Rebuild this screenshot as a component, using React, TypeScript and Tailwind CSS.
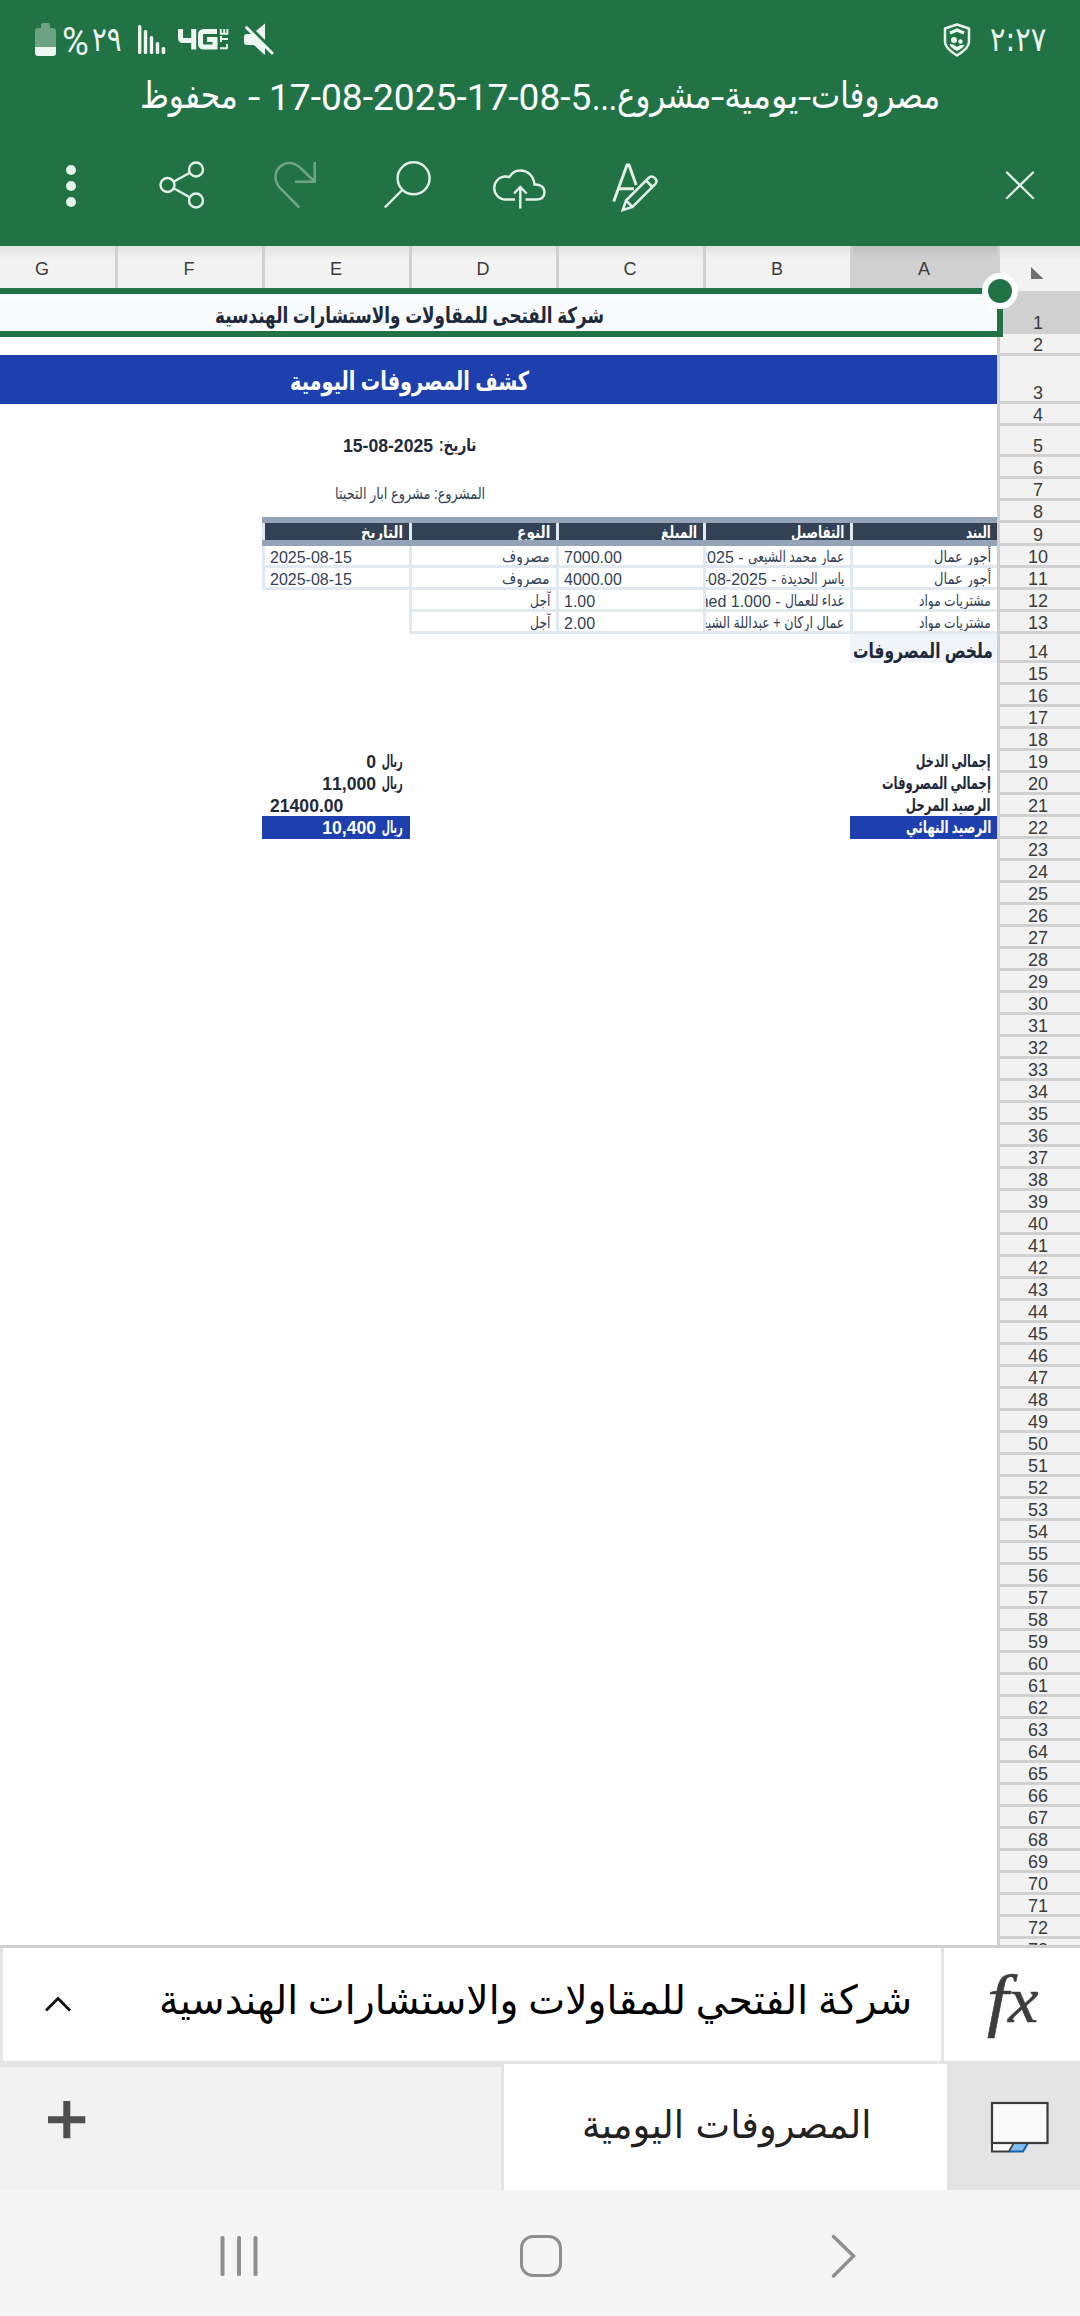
import { useLayoutEffect, useRef, useState, type ReactNode } from "react";

/** Text squeezed or stretched horizontally to a known width. */
function Fit({ w, className = "", up = 0, children }: { w: number; className?: string; up?: number; children: ReactNode }) {
  const ref = useRef<HTMLSpanElement>(null);
  const [scale, setScale] = useState(1);
  useLayoutEffect(() => {
    if (ref.current) setScale(w / ref.current.offsetWidth);
  }, [w]);
  return (
    <span className="inline-flex justify-start whitespace-nowrap" style={{ width: w }}>
      <span
        ref={ref}
        className={"inline-block shrink-0 whitespace-pre rtl:origin-right ltr:origin-left " + className}
        style={{ transform: `translateY(${-up}px) scaleX(${scale})` }}
      >
        {children}
      </span>
    </span>
  );
}

const sans = "font-['Liberation_Sans','DejaVu_Sans',sans-serif]";

function StatusBar() {
  return (
    <div className="flex h-[76px] items-start justify-between pl-[35px] pr-[34px] pt-[23px] text-[#eef6f1]">
      <div className="flex items-start">
        <svg width="21" height="33" viewBox="0 0 21 33">
          <path d="M6 5V2q0-2 2-2h5q2 0 2 2v3h3q3 0 3 3v16H0V8q0-3 3-3z" fill="#6ea285" />
          <path d="M0 24h21v6q0 3-3 3H3q-3 0-3-3z" fill="currentColor" />
        </svg>
        <div dir="ltr" className="ml-[6px] flex font-['Roboto','DejaVu_Sans',sans-serif] text-[38px] leading-[40px]">
          <Fit w={27} up={1}>%</Fit>
          <span className="ml-[3px] flex"><Fit w={30} className="text-[34px]" up={4}>٢٩</Fit></span>
        </div>
        <svg className="ml-[16px]" width="28" height="33" viewBox="0 0 28 33" fill="currentColor">
          <rect x="0" y="2" width="3.4" height="29" rx="1.5" />
          <rect x="5.8" y="7" width="3.4" height="24" rx="1.5" />
          <rect x="11.8" y="13" width="3.4" height="18" rx="1.5" />
          <rect x="17.8" y="19" width="3.4" height="12" rx="1.5" />
          <rect x="23.7" y="24" width="3.6" height="7" rx="1.5" />
        </svg>
        <svg className="ml-[12px]" width="51" height="33" viewBox="0 0 51 33" fill="none" stroke="currentColor">
          <path d="M2.500 6v9q0 2.500 2.500 2.500h10M15.700 6v20.500" strokeWidth="5" />
          <path d="M39 8.500H26q-3.500 0-3.500 3.500v8.500q0 3.500 3.500 3.500h11v-7.500h-8" strokeWidth="5" />
          <path d="M49 25.500v-4.500M42 25.300h7.500M43 19v-6M43 16h7M42.800 11.500V6M46.200 11.500V6M49.400 11.500V6M42 10.700h8" strokeWidth="1.900" />
        </svg>
        <svg className="ml-[15px]" width="32" height="34" viewBox="0 0 32 34">
          <path d="M0 14q0-3 3-3h6L21 24v7.500h-1L10 22H3q-3 0-3-3zM12 8l9-7.500V17z" fill="currentColor" />
          <path d="M2.500 4.500L28 30" stroke="currentColor" strokeWidth="3" strokeLinecap="round" />
        </svg>
      </div>
      <div className="flex items-start">
        <svg width="28" height="34" viewBox="0 0 28 34" fill="none">
          <path d="M14 1.500L26 5.500V19q0 6-12 13.500Q2 25 2 19V5.500z" stroke="currentColor" strokeWidth="2.500" strokeLinejoin="round" />
          <path d="M7 10l7-3 7 3" stroke="currentColor" strokeWidth="3.300" />
          <circle cx="11" cy="17" r="3" fill="currentColor" />
          <circle cx="17.500" cy="18.500" r="2.200" fill="currentColor" />
          <path d="M6.500 21q4-.5 7.500 3 3.500-3 7.500-2-1 3-7.500 6-6.500-3-7.500-7z" fill="currentColor" />
        </svg>
        <div className="ml-[19px] font-['DejaVu_Sans',sans-serif] text-[34px] leading-[32px]">
          <Fit w={56}>{"\u202d٢:٢٧"}</Fit>
        </div>
      </div>
    </div>
  );
}

function TitleBar() {
  return (
    <div dir="rtl" className="flex h-[56px] whitespace-pre pr-[140px] font-['Roboto','DejaVu_Sans',sans-serif] text-[37px] leading-[43px] text-white">
      <Fit w={129} up={2}>مصروفات</Fit>
      <Fit w={13} className="font-['Roboto']">{"\u200e-"}</Fit>
      <Fit w={74} up={2}>يومية</Fit>
      <Fit w={13} className="font-['Roboto']">{"\u200e-"}</Fit>
      <Fit w={94} up={2}>مشروع</Fit>
      <Fit w={25}>{"\u200e..."}</Fit>
      <bdo dir="ltr" className="flex"><Fit w={322}>17-08-2025-17-08-5</Fit></bdo>
      <span className="ml-[10px] mr-[10px] flex"><Fit w={12}>{"\u200e-"}</Fit></span>
      <Fit w={98} up={2}>محفوظ</Fit>
    </div>
  );
}

function Toolbar() {
  return (
    <div className="flex h-[114px] items-center justify-between pb-[8px] pl-[41px] pr-[30px] text-[#e3f1e8]">
      <div className="flex w-[620px] justify-between">
        <svg width="60" height="60" viewBox="41 155 60 60" fill="currentColor">
          <circle cx="71" cy="170" r="5" /><circle cx="71" cy="186" r="5" /><circle cx="71" cy="202" r="5" />
        </svg>
        <svg width="60" height="60" viewBox="153 155 60 60" fill="none" stroke="currentColor" strokeWidth="2.400">
          <circle cx="196" cy="169.500" r="7" /><circle cx="167.500" cy="185" r="7" /><circle cx="196" cy="200.500" r="7" />
          <path d="M173.600 181.700l16.200-8.900M173.600 188.300l16.200 8.900" />
        </svg>
        <svg width="60" height="60" viewBox="265 155 60 60" fill="none" stroke="#6fa586" strokeWidth="2.500">
          <path d="M314.700 162v19.700H295M314 181L299.500 167Q294 163 289.500 163C281 163 275.500 170 275.500 177Q275.500 183 280 188L299.300 207.500" />
        </svg>
        <svg width="60" height="60" viewBox="377 155 60 60" fill="none" stroke="currentColor" strokeWidth="2.400">
          <circle cx="413.600" cy="178.300" r="16" /><path d="M402.200 190L384.800 207.500" />
        </svg>
        <svg width="60" height="60" viewBox="489 155 60 60" fill="none" stroke="currentColor" strokeWidth="2.400">
          <path d="M515 199.500H505.500C499 199.500 494.200 194 494.200 188S499 176.500 505.500 176.500Q508 176.500 509.500 177C512 172.500 516 170.500 520 170.500C528 170.500 533.800 176 534.500 184.500C540 184 544.500 187 544.500 192Q544.500 199.500 536 199.500H525.500" />
          <path d="M520.300 208.500V187.500M514 193.500L520.300 187L526.600 193.500" />
        </svg>
        <svg width="60" height="60" viewBox="601 155 60 60" fill="none" stroke="currentColor" strokeWidth="2.900">
          <path d="M613.700 201.500L627 165H629L636.200 185M619 188.800H634" />
          <path d="M622.800 210L626 200.500L648.500 178Q651.500 175 654.800 178T655 184.500L632.500 207ZM626 200.500L632.500 207M646 180.500L652.500 187" strokeWidth="2.500" />
        </svg>
      </div>
      <svg width="60" height="60" viewBox="990 155 60 60" fill="none" stroke="currentColor" strokeWidth="2.300" strokeLinecap="round">
        <path d="M1007 172.500L1033 198M1033 172.500L1007 198" />
      </svg>
    </div>
  );
}

const columns = ["A", "B", "C", "D", "E", "F", "G"];

function ColumnHeader() {
  return (
    <div dir="rtl" className={"flex h-[42px] overflow-hidden text-[18px] leading-[46px] text-[#3b3b3b] " + sans}>
      {columns.map((c) => (
        <div
          key={c}
          className={
            "w-[147px] shrink-0 border-l-[3px] border-[#d0d0d0] pr-[2px] text-center " +
            (c === "A" ? "bg-linear-to-b from-[#c0c0c0] to-[#d0d0d0] to-30%" : "bg-linear-to-b from-[#e2e2e2] to-[#f2f2f2] to-30%")
          }
        >
          {c}
        </div>
      ))}
    </div>
  );
}

const firstHeights = [43, 22, 48, 22, 31, 22, 22, 22, 23, 22, 22, 22, 22, 29];

function RowHeader() {
  return (
    <div className={"w-[83px] shrink-0 border-l-[3px] border-[#d0d0d0] bg-[#f2f2f2] text-[18px] leading-[22px] text-[#3b3b3b] " + sans}>
      <div className="flex h-[45px] items-end bg-linear-to-b from-[#e2e2e2] to-[#f2f2f2] to-30% pb-[12px] pl-[31px]">
        <svg width="13" height="12" viewBox="0 0 13 12"><path d="M0 0L12.500 12H0z" fill="#6f6f6f" /></svg>
      </div>
      {Array.from({ length: 73 }, (_, i) => (
        <div
          key={i}
          className={"flex items-end justify-center border-b-[3px] border-[#d0d0d0] pr-1 " + (i === 0 ? "bg-[#d0d0d0]" : "")}
          style={{ height: firstHeights[i] ?? 22 }}
        >
          <span className="-mb-[3px] [font-kerning:none]">{i + 1}</span>
        </div>
      ))}
    </div>
  );
}

function Cell({ left = false, blank = false, children }: { left?: boolean; blank?: boolean; children?: ReactNode }) {
  return (
    <div
      className={
        "h-[22px] w-[147px] shrink-0 overflow-hidden whitespace-pre leading-[24px] [font-kerning:none] " +
        (blank ? "" : "border-b-[3px] border-l-[3px] border-[#e2e8f0] ") +
        (left ? "pl-[5px] text-left" : "pr-[6px] text-right")
      }
    >
      {children}
    </div>
  );
}

function HeadCell({ w, children }: { w: number; children: string }) {
  return (
    <div className="h-[17px] w-[147px] shrink-0 overflow-hidden border-l-[3px] border-[#e2e8f0] bg-[#334155] px-[6px] leading-[20px]">
      <Fit w={w}>{children}</Fit>
    </div>
  );
}

function SummaryRow({ label, w, value, dark = false }: { label: string; w: number; value: ReactNode; dark?: boolean }) {
  return (
    <div className={"flex h-[22px] leading-[22px] " + (dark ? "text-white" : "text-[#1e293b]")}>
      <div className={"-mt-px h-[23px] w-[147px] pr-[6px] " + (dark ? "bg-[#1e40af]" : "")}>
        <Fit w={w}>{label}</Fit>
      </div>
      <div className="w-[440px]" />
      <div className={"-mt-px h-[23px] w-[148px] whitespace-pre pl-[8px] pr-[7px] pt-px " + (dark ? "bg-[#1e40af]" : "")}>
        {value}
      </div>
    </div>
  );
}

function Rial({ children }: { children: string }) {
  return (
    <span className="flex">
      <Fit w={21} up={1}>ريال</Fit>
      <span className="mr-[6px] [font-kerning:none]">{children}</span>
    </span>
  );
}

function Sheet() {
  return (
    <div className={"w-[997px] shrink-0 overflow-hidden bg-white " + sans}>
      <ColumnHeader />
      <div dir="rtl" className="text-[16px] text-[#334155]">
        <div className="h-[49px] border-y-[6px] border-[#217346] bg-white py-[3px]">
          <div className="h-[31px] bg-[#f8fafc] pr-[393px] text-[22px] font-bold leading-[38px] text-[#1e293b]">
            <Fit w={389}>شركة الفتحى للمقاولات والاستشارات الهندسية</Fit>
          </div>
        </div>
        <div className="mt-[18px] h-[49px] bg-[#1e40af] pr-[468px] text-[26px] font-bold leading-[53px] text-white">
          <Fit w={239}>كشف المصروفات اليومية</Fit>
        </div>
        <div className="flex h-[53px] pr-[521px] pt-[26px] text-[17.600px] font-bold leading-[33px] text-[#1e293b]">
          <Fit w={38} up={1}>تاريخ:</Fit>
          <bdo dir="ltr" className="mr-[5px]">15-08-2025</bdo>
        </div>
        <div className="h-[60px] pr-[512px] pt-[17px] leading-[40px]">
          <Fit w={150}>المشروع: مشروع ابار التحيتا</Fit>
        </div>
        <div className="flex h-[29px] w-[735px] border-y-[6px] border-[#94a3b8] text-[17px] font-bold text-white">
          <HeadCell w={25}>البند</HeadCell>
          <HeadCell w={53}>التفاصيل</HeadCell>
          <HeadCell w={36}>المبلغ</HeadCell>
          <HeadCell w={33}>النوع</HeadCell>
          <HeadCell w={42}>التاريخ</HeadCell>
        </div>
        <div className="flex">
          <Cell><Fit w={57} up={1}>أجور عمال</Fit></Cell>
          <Cell><Fit w={96} up={1}>عمار محمد الشيعى</Fit>{" - "}<bdo dir="ltr">17-08-2025</bdo></Cell>
          <Cell left>7000.00</Cell>
          <Cell><Fit w={48} up={1}>مصروف</Fit></Cell>
          <Cell left>2025-08-15</Cell>
        </div>
        <div className="flex">
          <Cell><Fit w={57} up={1}>أجور عمال</Fit></Cell>
          <Cell><Fit w={63} up={1}>ياسر الحديدة</Fit>{" - "}<bdo dir="ltr">15-08-2025</bdo></Cell>
          <Cell left>4000.00</Cell>
          <Cell><Fit w={48} up={1}>مصروف</Fit></Cell>
          <Cell left>2025-08-15</Cell>
        </div>
        <div className="flex">
          <Cell><Fit w={72} up={1}>مشتريات مواد</Fit></Cell>
          <Cell><Fit w={59} up={1}>غداء للعمال</Fit>{" - "}<bdo dir="ltr">Mohamed 1.000</bdo></Cell>
          <Cell left>1.00</Cell>
          <Cell><Fit w={20} up={1}>آجل</Fit></Cell>
          <Cell blank />
        </div>
        <div className="flex">
          <Cell><Fit w={72} up={1}>مشتريات مواد</Fit></Cell>
          <Cell><Fit w={153} up={1}>عمال اركان + عبداللة الشيعي</Fit></Cell>
          <Cell left>2.00</Cell>
          <Cell><Fit w={20} up={1}>آجل</Fit></Cell>
          <Cell blank />
        </div>
        <div className="h-[29px] w-[147px] bg-[#f1f5f9] pr-1 text-[21px] font-bold leading-[33px] text-[#1e293b]">
          <Fit w={140}>ملخص المصروفات</Fit>
        </div>
        <div className="mt-[88px] text-[17.600px] font-bold">
          <SummaryRow label="إجمالي الدخل" w={75} value={<Rial>0</Rial>} />
          <SummaryRow label="إجمالي المصروفات" w={109} value={<Rial>11,000</Rial>} />
          <SummaryRow label="الرصيد المرحل" w={85} value={<div className="text-left">21400.00</div>} />
          <SummaryRow label="الرصيد النهائي" w={85} value={<Rial>10,400</Rial>} dark />
        </div>
      </div>
    </div>
  );
}

function FormulaBar() {
  return (
    <div className="flex h-[119px] border-y-[3px] border-t-[#d0d0d0] border-b-[#e4e4e4] bg-white">
      <div className="flex flex-1 items-center justify-between border-x-[3px] border-[#e4e4e4] pl-[40px] pr-[29px]">
        <svg width="31" height="20" viewBox="0 0 31 20" fill="none" stroke="#111" strokeWidth="2.800">
          <path d="M3 15.500L15 3.500L27 15.500" />
        </svg>
        <div dir="rtl" className="text-[40px] leading-[60px] text-black font-['Liberation_Serif','DejaVu_Sans',serif]">
          <Fit w={753} up={4}>شركة الفتحي للمقاولات والاستشارات الهندسية</Fit>
        </div>
      </div>
      <div className="w-[136px] pl-[43px] pt-[2px] font-['Liberation_Serif',serif] text-[70px] italic leading-[100px] text-[#3d3d3b]">
        <span className="flex [-webkit-text-stroke:0.6px_#3d3d3b]">
          <Fit w={21}>f</Fit>
          <Fit w={30} className="text-[66px]">x</Fit>
        </span>
      </div>
    </div>
  );
}

function SheetTabs() {
  return (
    <div className="flex h-[126px]">
      <div className="w-[504px] border-r-[3px] border-t-[3px] border-[#e4e4e4] bg-[#f2f2f2] pl-[48px] pt-[34px]">
        <svg width="38" height="38" viewBox="0 0 38 38" fill="#4f4f4f">
          <path d="M15.300 0h7v15.300H37.300v7H22.300V37.300h-7V22.300H0v-7H15.300z" />
        </svg>
      </div>
      <div dir="rtl" className="w-[443px] bg-white pr-[76px] pt-[31px] font-['DejaVu_Sans',sans-serif] text-[38px] leading-[60px] text-[#222]">
        <Fit w={289}>المصروفات اليومية</Fit>
      </div>
      <div className="flex-1 bg-[#e4e4e4] pl-[43px] pt-[37px]">
        <svg width="60" height="52" viewBox="0 0 60 52">
          <path d="M2 42v8.500h17l5-8.500z" fill="#fafafa" stroke="#3b3b3b" strokeWidth="2" />
          <path d="M25 42h13l-5 8.500H20z" fill="#83beec" />
          <path d="M38 42l-5 8.500H19.500" fill="none" stroke="#1064b0" strokeWidth="2" />
          <rect x="2" y="2" width="55.500" height="40" fill="#fafafa" stroke="#3b3b3b" strokeWidth="2.200" />
        </svg>
      </div>
    </div>
  );
}

function NavBar() {
  return (
    <div className="flex h-[126px] items-center justify-between bg-[#f5f5f5] pb-[6px] pl-[209px] pr-[207px] pt-[12px]">
      <svg width="60" height="60" viewBox="0 0 60 60" fill="#8f8f8f" className="-mt-[1px]">
        <rect x="11.500" y="10" width="4" height="40" rx="1.500" />
        <rect x="28" y="10" width="4" height="40" rx="1.500" />
        <rect x="44.500" y="10" width="4" height="40" rx="1.500" />
      </svg>
      <div className="h-[42px] w-[42px] rounded-[13px] border-[3.500px] border-[#8f8f8f]" />
      <svg width="60" height="60" viewBox="0 0 60 60" fill="none" stroke="#8f8f8f" strokeWidth="3.500" strokeLinecap="round">
        <path d="M20.500 10.500L40.500 30L20.500 50" />
      </svg>
    </div>
  );
}

export default function App() {
  return (
    <div className="flex h-[2316px] w-[1080px] flex-col overflow-hidden bg-white">
      <header className="h-[246px] shrink-0 bg-[#217346]">
        <StatusBar />
        <TitleBar />
        <Toolbar />
      </header>
      <main className="relative flex h-[1699px] shrink-0 overflow-hidden">
        <Sheet />
        <RowHeader />
        <div className="absolute left-[997px] top-[42px] h-[49px] w-[6px] bg-[#217346]" />
        <div className="absolute left-[982px] top-[27px] h-[36px] w-[36px] rounded-full border-[6px] border-white bg-[#217346]" />
      </main>
      <FormulaBar />
      <SheetTabs />
      <NavBar />
    </div>
  );
}
